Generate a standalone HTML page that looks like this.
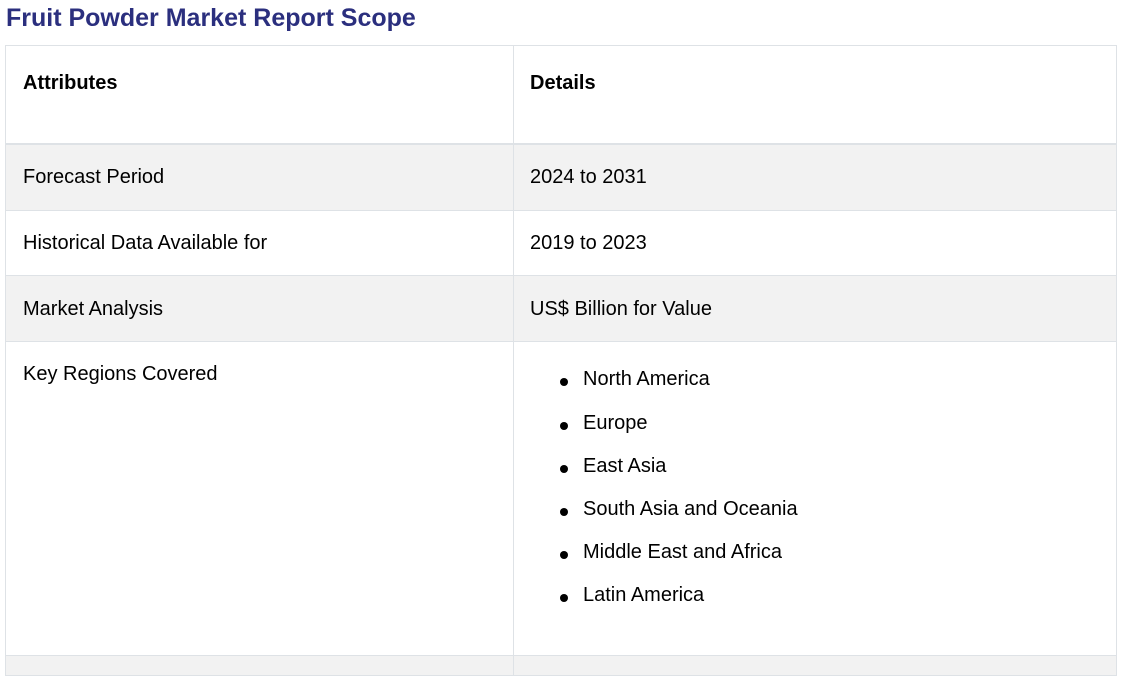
<!DOCTYPE html>
<html><head><meta charset="utf-8"><style>
body{margin:0;background:#fff;width:1125px;height:661px;overflow:hidden;font-family:"Liberation Sans",sans-serif;color:#000;position:relative}
.t{position:absolute;left:6px;top:4px;font-size:25px;font-weight:bold;color:#2b2f7e;white-space:nowrap}
.r{position:absolute;left:5px;width:1112px;border:1px solid #dee2e6;border-top:none;box-sizing:border-box}
.c{position:absolute;left:507px;top:0;bottom:0;border-left:1px solid #dee2e6}
.x{position:absolute;font-size:20px;white-space:nowrap}
.g{background:#f2f2f2}
ul{margin:0;padding:0;list-style:none}
li{position:absolute;left:583px;font-size:20px;white-space:nowrap}
li:before{content:"";position:absolute;left:-23px;top:10px;width:8px;height:8px;border-radius:50%;background:#000}
</style></head><body>
<div class="t">Fruit Powder Market Report Scope</div>
<div class="r" style="top:45px;height:100px;border-top:1px solid #dee2e6;border-bottom:2px solid #dee2e6"><div class="c"></div></div>
<div class="x" style="left:23px;top:72px;font-weight:bold">Attributes</div>
<div class="x" style="left:530px;top:72px;font-weight:bold">Details</div>
<div class="r g" style="top:145px;height:66px"><div class="c"></div></div>
<div class="x" style="left:23px;top:166px">Forecast Period</div>
<div class="x" style="left:530px;top:166px">2024 to 2031</div>
<div class="r" style="top:211px;height:65px"><div class="c"></div></div>
<div class="x" style="left:23px;top:232px">Historical Data Available for</div>
<div class="x" style="left:530px;top:232px">2019 to 2023</div>
<div class="r g" style="top:276px;height:66px"><div class="c"></div></div>
<div class="x" style="left:23px;top:298px">Market Analysis</div>
<div class="x" style="left:530px;top:298px">US$ Billion for Value</div>
<div class="r" style="top:342px;height:314px"><div class="c"></div></div>
<div class="x" style="left:23px;top:363px">Key Regions Covered</div>
<ul>
<li style="top:368px">North America</li>
<li style="top:412px">Europe</li>
<li style="top:455px">East Asia</li>
<li style="top:498px">South Asia and Oceania</li>
<li style="top:541px">Middle East and Africa</li>
<li style="top:584px">Latin America</li>
</ul>
<div class="r g" style="top:656px;height:20px"><div class="c"></div></div>
</body></html>
